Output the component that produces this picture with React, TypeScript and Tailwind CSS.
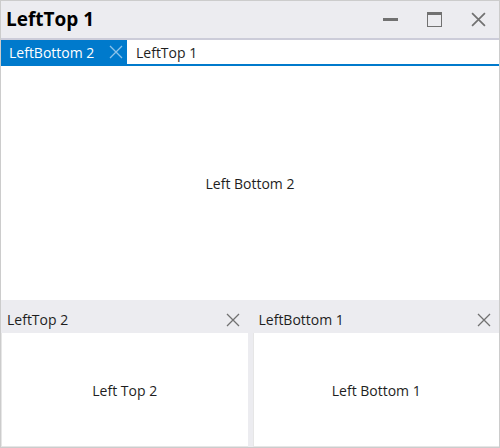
import React from "react";

const font = { fontFamily: '"Open Sans", "Noto Sans", sans-serif' };

function XIcon({ size = 14, color = "#717171", width = 1.3 }: { size?: number; color?: string; width?: number }) {
  return (
    <svg width={size} height={size} viewBox="0 0 14 14">
      <path d="M1 1 L13 13 M13 1 L1 13" stroke={color} strokeWidth={width} fill="none" />
    </svg>
  );
}

function Pane({ title, body }: { title: string; body: string }) {
  return (
    <div className="flex flex-col flex-1 min-w-0">
      <div className="h-[33px] flex items-center justify-between pt-[6px] pl-[6px] pr-[8px] text-[14px] text-[#1e1e1e]">
        <span>{title}</span>
        <XIcon />
      </div>
      <div className="flex-1 bg-white border-l border-b border-[#e6e6e6] flex items-center justify-center pt-[2px] text-[14px] text-[#1e1e1e]">
        {body}
      </div>
    </div>
  );
}

export default function App() {
  return (
    <div
      style={font}
      className="w-[500px] h-[448px] border border-[#cccccc] bg-[#ececf0] flex flex-col overflow-hidden"
    >
      <div className="h-[37px] flex items-center justify-between pl-[5px] pr-[13px] shrink-0">
        <span className="text-[19px] font-bold text-black leading-none">LeftTop 1</span>
        <div className="flex items-center gap-[29px]">
          <div className="w-[15px] h-[3px] bg-[#717171]" />
          <div className="w-[15px] h-[15px] border border-t-[3px] border-[#717171]" />
          <XIcon size={15} width={1.6} />
        </div>
      </div>
      <div className="h-[2px] bg-[#ccccd9] shrink-0" />
      <div className="h-[26px] bg-white flex items-stretch border-b-2 border-[#007acc] shrink-0">
        <div className="bg-[#007acc] text-white text-[14px] flex items-center pl-[8px] pr-[4px] w-[126px]">
          <span className="flex-1">LeftBottom 2</span>
          <XIcon color="#8ec3ea" />
        </div>
        <div className="flex items-center pl-[9px] text-[14px] text-[#1e1e1e]">LeftTop 1</div>
      </div>
      <div className="h-[234px] bg-white flex items-center justify-center text-[14px] text-[#1e1e1e] shrink-0">
        Left Bottom 2
      </div>
      <div className="flex-1 flex gap-[5px]">
        <Pane title="LeftTop 2" body="Left Top 2" />
        <Pane title="LeftBottom 1" body="Left Bottom 1" />
      </div>
    </div>
  );
}
